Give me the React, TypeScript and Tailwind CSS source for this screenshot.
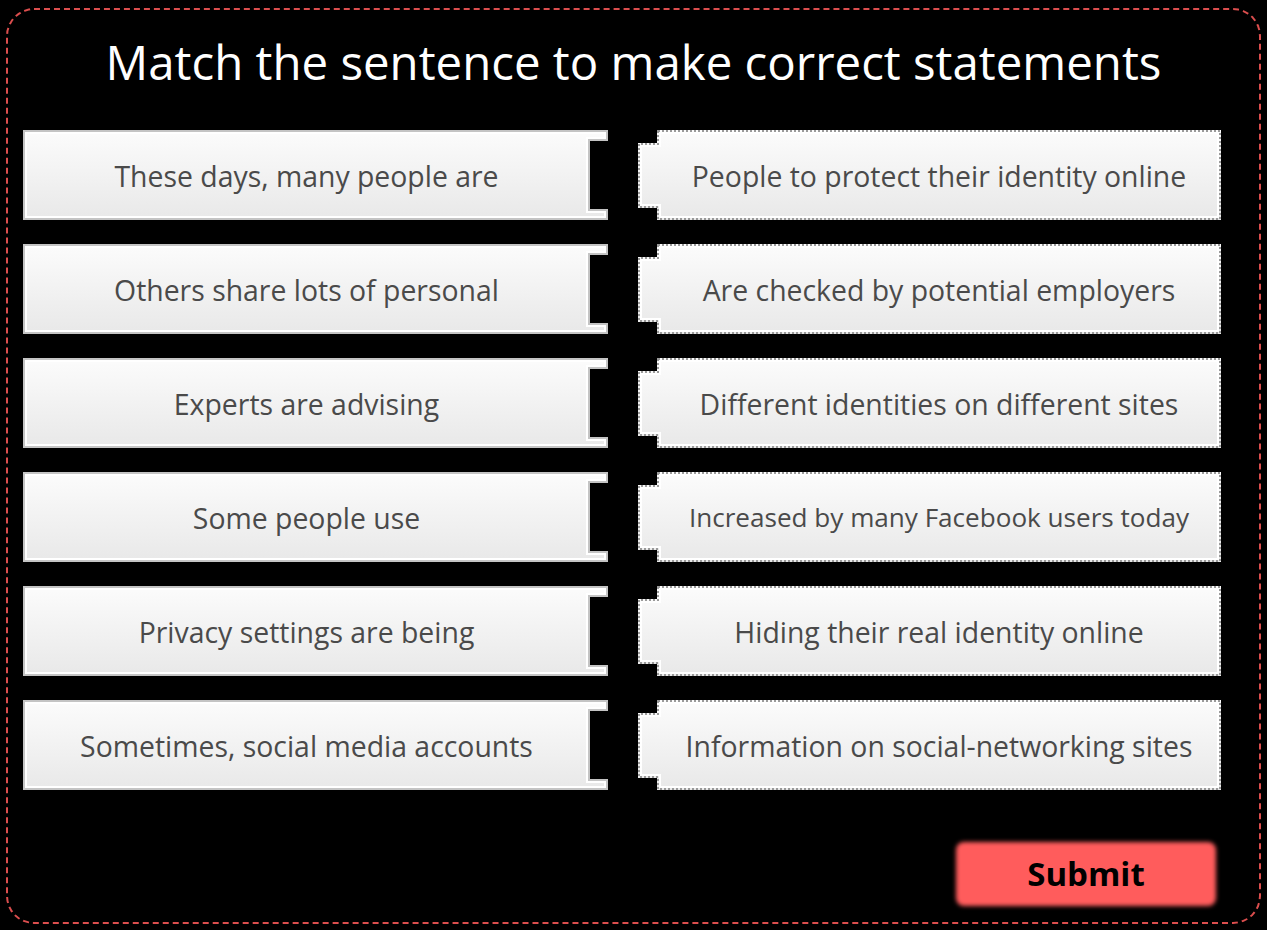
const pairs: [string, string, boolean?][] = [
  ["These days, many people are", "People to protect their identity online"],
  ["Others share lots of personal", "Are checked by potential employers"],
  ["Experts are advising", "Different identities on different sites"],
  ["Some people use", "Increased by many Facebook users today", true],
  ["Privacy settings are being", "Hiding their real identity online"],
  ["Sometimes, social media accounts", "Information on social-networking sites"],
];

const font = { fontFamily: '"Open Sans", "Liberation Sans", sans-serif' };

function LeftCard({ text, id }: { text: string; id: string }) {
  return (
    <div className="relative w-[585px] h-[90px] shrink-0">
      <svg className="absolute inset-0" width="585" height="90" viewBox="0 0 585 90">
        <defs>
          <linearGradient id={id} x1="0" y1="0" x2="0" y2="1">
            <stop offset="0" stopColor="#fcfcfc" />
            <stop offset="1" stopColor="#e8e8e8" />
          </linearGradient>
        </defs>
        <path d="M0 0H585V11H567V79H585V90H0Z" fill={`url(#${id})`} />
        <path d="M1 1H584V10H566V80H584V89H1Z" fill="none" stroke="#c4c4c4" strokeWidth="2" />
        <path d="M3 3H582V8H564V82H582V87H3Z" fill="none" stroke="#ffffff" strokeWidth="2" />
      </svg>
      <div className="relative h-full flex items-center justify-center pr-[18px] pt-[2px] text-[28.4px] text-[#4a4a4a]">
        {text}
      </div>
    </div>
  );
}

function RightCard({ text, id, small }: { text: string; id: string; small?: boolean }) {
  return (
    <div className="relative w-[583px] h-[90px] shrink-0">
      <svg className="absolute inset-0" width="583" height="90" viewBox="0 0 583 90">
        <defs>
          <linearGradient id={id} x1="0" y1="0" x2="0" y2="1">
            <stop offset="0" stopColor="#fcfcfc" />
            <stop offset="1" stopColor="#e8e8e8" />
          </linearGradient>
        </defs>
        <path d="M19 0H583V90H19V78H0V13H19Z" fill={`url(#${id})`} />
        <path d="M20 1H582V89H20V77H1V14H20Z" fill="none" stroke="#9a9a9a" strokeWidth="2" strokeDasharray="2 2" />
        <path d="M22 3H580V87H22V75H3V16H22Z" fill="none" stroke="#ffffff" strokeWidth="2" />
      </svg>
      <div
        className={
          small
            ? "relative h-full flex items-center justify-center pl-[19px] pt-[2px] text-[26.1px] text-[#4a4a4a]"
            : "relative h-full flex items-center justify-center pl-[19px] pt-[2px] text-[28.4px] text-[#4a4a4a]"
        }
      >
        {text}
      </div>
    </div>
  );
}

export default function App() {
  return (
    <div className="w-[1267px] h-[930px] bg-black pt-[8px] pl-[6px]" style={font}>
      <div className="w-[1255px] h-[916px] border-2 border-dashed border-[#dc4e4e] rounded-[28px] flex flex-col">
        <h1 className="mt-[23px] text-center text-white text-[47.4px] leading-[57px]">
          Match the sentence to make correct statements
        </h1>
        <div className="mt-[40px] pl-[15px] flex flex-col gap-[24px]">
          {pairs.map(([l, r, s], i) => (
            <div key={i} className="flex gap-[30px]">
              <LeftCard text={l} id={`lg${i}`} />
              <RightCard text={r} id={`rg${i}`} small={s} />
            </div>
          ))}
        </div>
        <div className="mt-[52px] flex justify-end pr-[43px]">
          <button className="relative w-[260px] h-[64px]">
            <div className="absolute inset-0 rounded-lg bg-[#ff5c5c] blur-[2px]" />
            <span className="relative text-[33px] font-bold text-black">Submit</span>
          </button>
        </div>
      </div>
    </div>
  );
}
